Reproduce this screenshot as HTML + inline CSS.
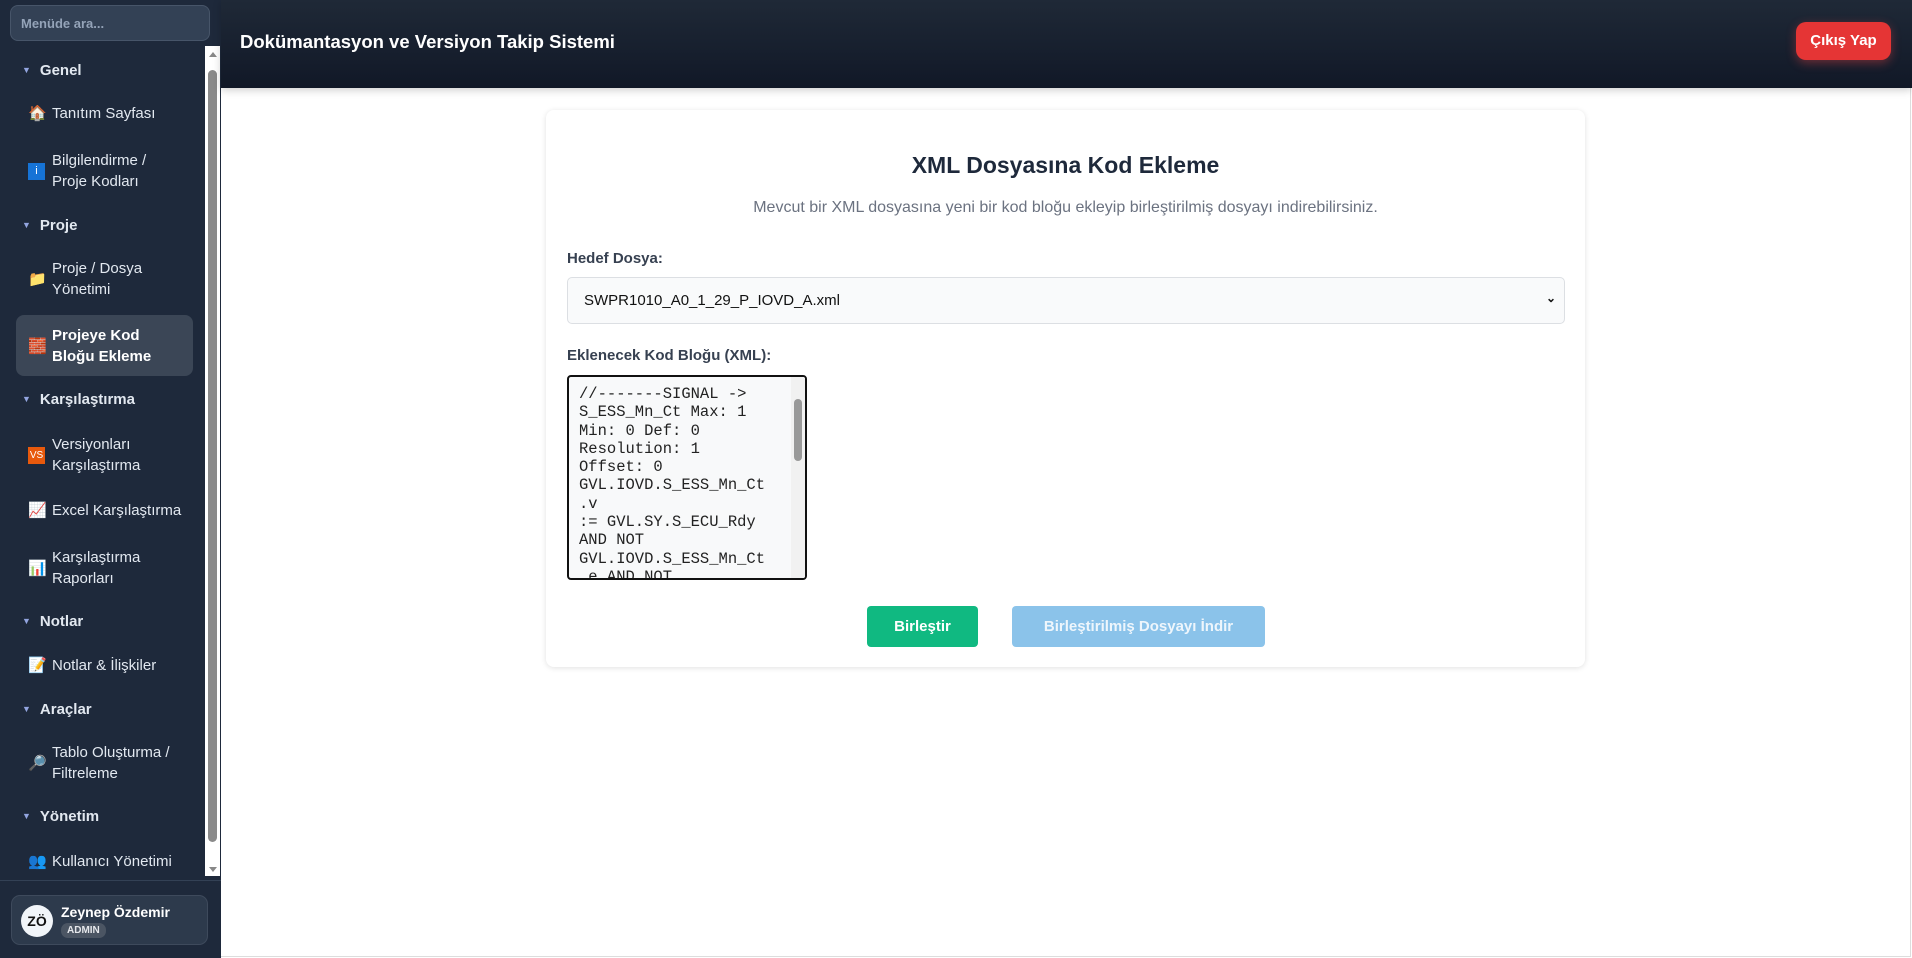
<!DOCTYPE html>
<html><head><meta charset="utf-8"><style>
*{box-sizing:border-box;margin:0;padding:0}
body{width:1912px;height:958px;overflow:hidden;font-family:"Liberation Sans",sans-serif;background:#fff;position:relative}
#sb{position:absolute;left:0;top:0;width:221px;height:958px;background:#1e293b}
#search{position:absolute;left:10px;top:5px;width:200px;height:36px;background:#334155;border:1px solid #475569;border-radius:8px;color:#94a3b8;font-size:13px;font-weight:bold;padding:10px 10px}
#scroll{position:absolute;left:205px;top:46px;width:15px;height:830px;background:#fff}
#thumb{position:absolute;left:3px;top:24px;width:9px;height:772px;background:#8a8a8a;border-radius:5px}
.sec{position:absolute;left:22px;color:#e2e8f0;font-weight:bold;font-size:15px}
.sec i{font-style:normal;color:#93a5e0;font-size:9px;margin-right:9px;vertical-align:2px}
.it{position:absolute;left:28px;color:#e2e8f0;font-size:15px;line-height:21px;display:flex;align-items:center}
.it .ic{width:17px;font-size:15px;margin-right:7px;text-align:center}
.act{position:absolute;left:16px;top:315px;width:177px;height:61px;background:#3b4656;border-radius:8px}
#foot{position:absolute;left:0;top:880px;width:221px;height:78px;border-top:1px solid #334155}
#user{position:absolute;left:11px;top:895px;width:197px;height:50px;background:#2d3a4c;border:1px solid #3e4a5c;border-radius:9px}
#av{position:absolute;left:9px;top:9px;width:32px;height:32px;border-radius:50%;background:#f1f5f9;color:#111;font-weight:bold;font-size:14px;text-align:center;line-height:32px}
#hd{position:absolute;left:221px;top:0;width:1691px;height:88px;background:linear-gradient(#1f2937,#111827);box-shadow:0 2px 8px rgba(0,0,0,.2)}
#hd h1{position:absolute;left:19px;top:31px;color:#fff;font-size:18.5px}
#out{position:absolute;right:21px;top:22px;width:95px;height:38px;background:#e53535;border-radius:10px;color:#fff;font-weight:bold;font-size:15px;text-align:center;line-height:38px;box-shadow:0 3px 10px rgba(239,68,68,.4)}
#main{position:absolute;left:221px;top:88px;width:1690px;height:869px;border-right:1px solid #ddd;border-bottom:1px solid #ddd}
#card{position:absolute;left:546px;top:110px;width:1039px;height:557px;background:#fff;border-radius:8px;box-shadow:0 1px 6px rgba(0,0,0,.12)}
.abs{position:absolute}
</style></head><body>
<div id="sb">
<div id="search">Menüde ara...</div>
<div id="scroll"><div style="position:absolute;left:4px;top:6px;border:4px solid transparent;border-bottom:5px solid #888;border-top:0"></div><div id="thumb"></div><div style="position:absolute;left:4px;bottom:4px;border:4px solid transparent;border-top:5px solid #888;border-bottom:0"></div></div>
<div class="act"></div>
<div class="sec" style="top:62px"><i>▼</i>Genel</div>
<div class="it" style="top:103px"><span class="ic">🏠</span>Tanıtım Sayfası</div>
<div class="it" style="top:150px"><span class="ic" style="background:#1673d6;color:#fff;font-size:11px;height:17px;line-height:17px">i</span>Bilgilendirme /<br>Proje Kodları</div>
<div class="sec" style="top:217px"><i>▼</i>Proje</div>
<div class="it" style="top:258px"><span class="ic">📁</span>Proje / Dosya<br>Yönetimi</div>
<div class="it" style="top:325px;font-weight:bold;color:#fff"><span class="ic">🧱</span>Projeye Kod<br>Bloğu Ekleme</div>
<div class="sec" style="top:391px"><i>▼</i>Karşılaştırma</div>
<div class="it" style="top:434px"><span class="ic" style="background:#e8590c;color:#fff;font-size:10px;height:17px;line-height:17px">VS</span>Versiyonları<br>Karşılaştırma</div>
<div class="it" style="top:500px"><span class="ic">📈</span>Excel Karşılaştırma</div>
<div class="it" style="top:547px"><span class="ic">📊</span>Karşılaştırma<br>Raporları</div>
<div class="sec" style="top:613px"><i>▼</i>Notlar</div>
<div class="it" style="top:655px"><span class="ic">📝</span>Notlar &amp; İlişkiler</div>
<div class="sec" style="top:701px"><i>▼</i>Araçlar</div>
<div class="it" style="top:742px"><span class="ic">🔎</span>Tablo Oluşturma /<br>Filtreleme</div>
<div class="sec" style="top:808px"><i>▼</i>Yönetim</div>
<div class="it" style="top:851px"><span class="ic">👥</span>Kullanıcı Yönetimi</div>
<div id="foot"></div>
<div id="user"><div id="av">ZÖ</div>
<div class="abs" style="left:49px;top:8px;color:#fff;font-weight:bold;font-size:14px">Zeynep Özdemir</div>
<div class="abs" style="left:49px;top:27px;background:#4b5563;color:#e5e7eb;font-weight:bold;font-size:10px;padding:2px 6px;border-radius:7px">ADMIN</div></div>
</div>
<div id="main"></div>
<div id="hd"><h1>Dokümantasyon ve Versiyon Takip Sistemi</h1><div id="out">Çıkış Yap</div></div>
<div id="card"></div>
<div class="abs" style="left:546px;top:152px;width:1039px;text-align:center;font-size:23px;font-weight:bold;color:#1e293b">XML Dosyasına Kod Ekleme</div>
<div class="abs" style="left:546px;top:199px;width:1039px;text-align:center;font-size:16px;color:#6b7280">Mevcut bir XML dosyasına yeni bir kod bloğu ekleyip birleştirilmiş dosyayı indirebilirsiniz.</div>
<div class="abs" style="left:567px;top:250px;font-size:15px;font-weight:bold;color:#374151">Hedef Dosya:</div>
<div class="abs" style="left:567px;top:277px;width:998px;height:47px;background:#f9fafb;border:1px solid #dcdfe3;border-radius:5px;font-size:15px;color:#111;padding:14px 16px">SWPR1010_A0_1_29_P_IOVD_A.xml<span style="position:absolute;right:8px;top:13px;font-size:12px;font-weight:bold">⌄</span></div>
<div class="abs" style="left:567px;top:347px;font-size:15px;font-weight:bold;color:#374151">Eklenecek Kod Bloğu (XML):</div>
<div class="abs" style="left:567px;top:375px;width:240px;height:205px;border:2px solid #111;border-radius:4px;background:#f8f9fa;overflow:hidden">
<pre style="font-family:'Liberation Mono',monospace;font-size:15.5px;line-height:18.3px;color:#222;padding:8px 10px">//-------SIGNAL ->
S_ESS_Mn_Ct Max: 1
Min: 0 Def: 0
Resolution: 1
Offset: 0
GVL.IOVD.S_ESS_Mn_Ct
.v
:= GVL.SY.S_ECU_Rdy
AND NOT
GVL.IOVD.S_ESS_Mn_Ct
.e AND NOT</pre>
<div class="abs" style="right:0;top:0;width:14px;height:100%;background:#f1f1f1"><div class="abs" style="left:3px;top:22px;width:8px;height:62px;background:#999;border-radius:4px"></div></div>
</div>
<div class="abs" style="left:867px;top:606px;width:111px;height:41px;background:#10b981;border-radius:4px;color:#fff;font-weight:bold;font-size:15px;text-align:center;line-height:41px">Birleştir</div>
<div class="abs" style="left:1012px;top:606px;width:253px;height:41px;background:#8bc3ea;border-radius:4px;color:#eef6fc;font-weight:bold;font-size:15px;text-align:center;line-height:41px">Birleştirilmiş Dosyayı İndir</div>
</body></html>
